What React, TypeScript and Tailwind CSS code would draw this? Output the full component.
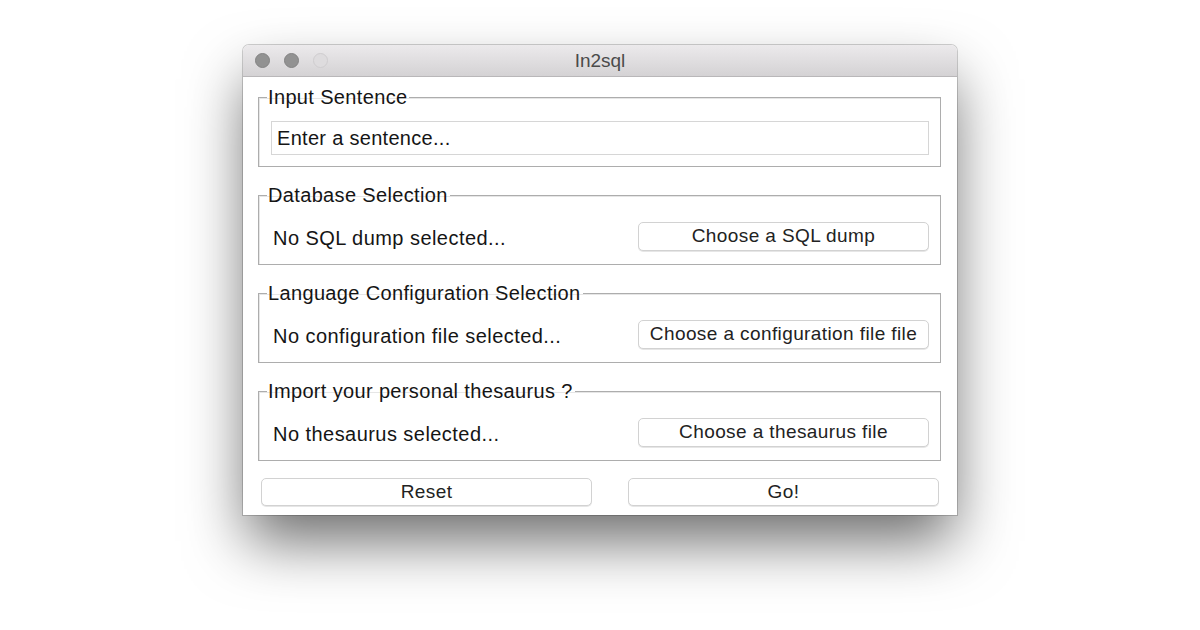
import React from "react";

const font = { fontFamily: '"Liberation Sans", Arial, Helvetica, sans-serif' };

function Group({ title, children }: { title: string; children: React.ReactNode }) {
  return (
    <fieldset className="border border-[#adadad] shadow-[inset_1px_1px_0_#e6e6e6]">
      <legend className="ml-[8px] pl-[1px] pr-[2px] text-[20px] leading-[23px] tracking-[0.35px] text-[#151515]">
        {title}
      </legend>
      <div className="pt-[12px] pb-[11px] pl-[12px] pr-[11px]">{children}</div>
    </fieldset>
  );
}

function FileRow({ label, button }: { label: string; button: string }) {
  return (
    <div className="flex h-[34px] items-center justify-between">
      <span className="pl-[2px] pt-[3px] text-[20px] tracking-[0.45px] text-[#151515]">{label}</span>
      <button className="mt-[1px] flex h-[29px] w-[291px] items-center justify-center rounded-[5px] border border-[#d2d2d2] bg-white text-[19px] tracking-[0.4px] text-[#222] shadow-[0_1px_0_#e6e6e6]">
        {button}
      </button>
    </div>
  );
}

export default function App() {
  return (
    <div className="min-h-[630px] w-full bg-white pt-[45px]" style={font}>
      <div className="mx-auto w-[714px] rounded-t-[6px] bg-white shadow-[0_0_0_1px_rgba(0,0,0,0.18),0_30px_60px_-4px_rgba(0,0,0,0.58)]">
        {/* title bar */}
        <div className="relative flex h-[32px] items-center rounded-t-[6px] border-b border-[#b9b7b9] bg-gradient-to-b from-[#eceaec] to-[#d4d2d4] pl-[12px]">
          <div className="flex gap-[14px]">
            <span className="h-[15px] w-[15px] rounded-full border border-[#838383] bg-[#929292]" />
            <span className="h-[15px] w-[15px] rounded-full border border-[#838383] bg-[#929292]" />
            <span className="h-[15px] w-[15px] rounded-full border border-[#cfcdcf] bg-[#dedcde]" />
          </div>
          <span className="absolute inset-x-0 top-[5px] text-center text-[19px] leading-[22px] text-[#4a4a4a]">
            In2sql
          </span>
        </div>

        {/* content */}
        <div className="flex flex-col gap-[17px] pl-[15px] pr-[16px] pt-[9px]">
          <Group title="Input Sentence">
            <input
              defaultValue="Enter a sentence..."
              className="block h-[34px] w-full border border-[#d6d6d6] bg-white px-[5px] text-[20px] tracking-[0.3px] text-[#151515] outline-none"
            />
          </Group>
          <Group title="Database Selection">
            <FileRow label="No SQL dump selected..." button="Choose a SQL dump" />
          </Group>
          <Group title="Language Configuration Selection">
            <FileRow label="No configuration file selected..." button="Choose a configuration file file" />
          </Group>
          <Group title="Import your personal thesaurus ?">
            <FileRow label="No thesaurus selected..." button="Choose a thesaurus file" />
          </Group>
        </div>

        <div className="flex justify-between px-[18px] pb-[9px] pt-[17px]">
          <button className="flex h-[28px] w-[331px] items-center justify-center rounded-[5px] border border-[#d2d2d2] bg-white text-[19px] tracking-[0.4px] text-[#222] shadow-[0_1px_0_#e6e6e6]">
            Reset
          </button>
          <button className="flex h-[28px] w-[311px] items-center justify-center rounded-[5px] border border-[#d2d2d2] bg-white text-[19px] tracking-[0.4px] text-[#222] shadow-[0_1px_0_#e6e6e6]">
            Go!
          </button>
        </div>
      </div>
    </div>
  );
}
